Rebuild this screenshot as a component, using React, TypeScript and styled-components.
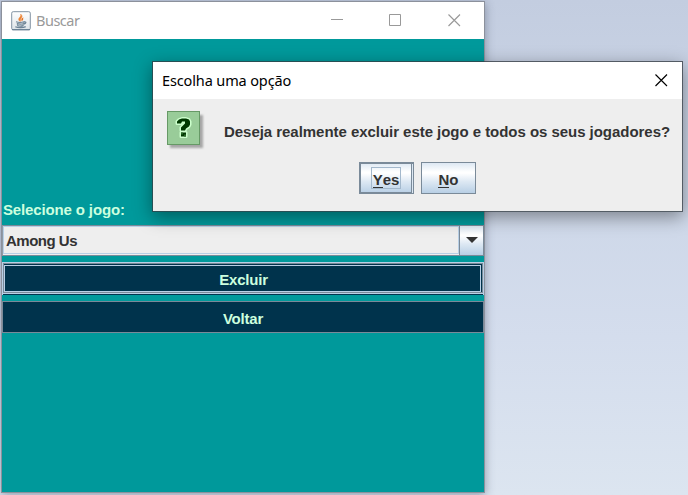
import React from "react";
import styled, { createGlobalStyle } from "styled-components";

const GlobalStyle = createGlobalStyle`
  * { box-sizing: border-box; }
  body { margin: 0; overflow: hidden; }
`;

const Desktop = styled.div`
  position: relative;
  width: 688px;
  height: 495px;
  overflow: hidden;
  background: linear-gradient(180deg, #c3cde0 0%, #ccd6e7 35%, #d4dded 68%, #dce5f0 100%);
  font-family: "Liberation Sans", Arial, sans-serif;
  font-weight: bold;
  font-size: 15px;
  color: #333;
`;

const Frame = styled.section<{ $x: number; $y: number; $w: number; $h: number; $active?: boolean }>`
  position: absolute;
  left: ${(p) => p.$x}px;
  top: ${(p) => p.$y}px;
  width: ${(p) => p.$w}px;
  height: ${(p) => p.$h}px;
  display: flex;
  flex-direction: column;
  border: 1px solid ${(p) => (p.$active ? "rgba(50, 58, 64, 0.78)" : "#8c919c")};
  background-clip: padding-box;
  box-shadow: ${(p) =>
    p.$active ? "0 5px 17px rgba(0, 0, 0, 0.4)" : "0 2px 9px rgba(40, 50, 75, 0.42)"};
`;

const TitleBar = styled.header<{ $active?: boolean }>`
  flex: none;
  display: flex;
  align-items: center;
  height: 37px;
  padding-left: 9px;
  background: #fff;
  font-family: "Noto Sans", sans-serif;
  font-weight: normal;
  font-size: 14.5px;
  color: ${(p) => (p.$active ? "#000" : "#999")};
`;

const Title = styled.span<{ $spacing: number }>`
  flex: 1;
  padding-bottom: 2px;
  letter-spacing: ${(p) => p.$spacing}px;
  white-space: nowrap;
`;

const AppIcon = styled.svg`
  width: 20px;
  height: 20px;
  margin-right: 5px;
`;

const WindowControls = styled.div<{ $inset: number }>`
  display: flex;
  gap: 46px;
  padding-right: ${(p) => p.$inset}px;
`;

const ControlIcon = styled.svg`
  display: block;
  width: 13px;
  height: 13px;
  fill: none;
  stroke: currentColor;
`;

const SearchBody = styled.main`
  flex: 1;
  display: flex;
  flex-direction: column;
  padding-top: 162px;
  background: #00999b;
`;

const FieldLabel = styled.label`
  height: 24px;
  padding-left: 1px;
  line-height: 17px;
  color: #ccffdf;
  letter-spacing: -0.14px;
`;

const ComboBox = styled.div`
  display: flex;
  height: 31px;
  border: 1px solid #7a8a99;
  border-left-color: #8f9aa6;
  margin-bottom: 6px;
  background: #eee;
`;

const ComboValue = styled.div`
  flex: 1;
  border: 1px solid #b8cfe5;
  margin-bottom: 1px;
  padding-left: 2px;
  line-height: 27px;
  letter-spacing: -0.5px;
`;

const metal = "linear-gradient(180deg, #dde8f3 0%, #fff 30%, #fff 34%, #dde8f3 62%, #b8cfe5 100%)";

const ComboArrow = styled.div`
  display: flex;
  align-items: center;
  justify-content: center;
  width: 24px;
  border-left: 1px solid #7a8a99;
  background: ${metal};
`;

const ArrowIcon = styled.svg`
  width: 12px;
  height: 6px;
  margin-bottom: 1px;
  fill: #333;
`;

const ActionButton = styled.button<{ $focused?: boolean }>`
  display: block;
  width: 100%;
  height: 32px;
  flex: none;
  padding: 0;
  border: 1px solid #7a8a99;
  background: #00334c;
  color: #ccffdf;
  font: inherit;
  line-height: 34px;
  letter-spacing: -0.2px;
  ${(p) =>
    p.$focused &&
    `
    height: 33px;
    margin-bottom: 6px;
    padding: 1px 1px 2px 0;
    border: 1px solid #b8cfe5;
    border-bottom: 0;
  `}
`;

const FocusBorder = styled.span`
  display: block;
  height: 30px;
  margin: -1px -1px 0 0;
  padding: 1px 1px 0 0;
  border: 1px solid #7a8a99;
  box-shadow: 0 1px 0 #b8cfe5;
`;

const FocusInner = styled.span`
  display: block;
  height: 27px;
  border: 1px solid #b8cfe5;
  line-height: 27px;
  padding-left: 2px;
`;

const DialogBody = styled.main`
  flex: 1;
  padding: 12px 12px 0 14px;
  background: #eee;
`;

const MessageRow = styled.div`
  display: flex;
  height: 51px;
`;

const QuestionIcon = styled.svg`
  flex: none;
  width: 40px;
  height: 42px;
`;

const Message = styled.p`
  margin: 0 0 0 17px;
  line-height: 42px;
  letter-spacing: -0.04px;
  white-space: nowrap;
`;

const DialogActions = styled.div`
  display: flex;
  gap: 7px;
  padding-left: 192px;
`;

const DialogButton = styled.button<{ $focused?: boolean }>`
  display: flex;
  align-items: center;
  justify-content: center;
  width: 55px;
  height: 32px;
  padding: 3px 0 0;
  border: 1px solid #7a8a99;
  background: ${metal};
  color: #333;
  font: inherit;
  ${(p) =>
    p.$focused &&
    `
    padding: 0 2px 0 0;
    box-shadow: inset 1px 1px 0 #7a8a99, inset -1px 0 0 #dde8f3, inset -2px -1px 0 #7a8a99;
  `}
`;

const FocusText = styled.span`
  width: 30px;
  height: 22px;
  padding-left: 1px;
  border: 1px solid #a3b8cc;
  line-height: 23px;
`;

const Mnemonic = styled.span`
  display: inline-block;
  height: 17px;
  line-height: 17px;
  border-bottom: 1px solid #333;
`;

const CloseIcon = () => (
  <ControlIcon viewBox="0 0 13 13">
    <path d="M.5.5 12 12M12 .5.5 12" strokeWidth="1.15" />
  </ControlIcon>
);

const JavaIcon = () => (
  <AppIcon viewBox="0 0 20 20">
    <defs>
      <linearGradient id="plate" x2="0" y2="1">
        <stop stopColor="#fff" />
        <stop offset="1" stopColor="#dce3e8" />
      </linearGradient>
    </defs>
    <rect x=".7" y=".7" width="18.6" height="18.1" rx="1.5" fill="url(#plate)" stroke="#8293a3" />
    <path d="M1 18.7h18" stroke="#5f788d" />
    <path d="M8.8 10.2c-3.2-3 2-3.7.9-7 3.4 3-1.2 4.2-.2 7Z" fill="#ed7f2a" stroke="#ed8b43" strokeWidth=".7" />
    <path d="M10.8 10.2c-1.2-1.9 0-3.1 1.8-4-1.1 1.7.7 2.1-1.8 4Z" fill="#e76f1d" />
    <path d="M5 10.8c2 .7 6 .7 8 0v1.7c-2 .7-5 .7-7.2.2M6.4 13.4l.6 1.3c1.6.5 3.8.4 5-.1l.3-1.2M13.2 10.8c2.5-.3 2 2-.3 2.3M4.3 15.7c2.5 1.2 8 1.2 10.4-.1" fill="none" stroke="#6d8496" strokeWidth="1.2" />
  </AppIcon>
);

const QuestionMark = () => (
  <QuestionIcon viewBox="0 0 40 42">
    <defs>
      <filter id="soft" x="-20%" y="-20%" width="150%" height="150%">
        <feGaussianBlur stdDeviation="1.3" />
      </filter>
    </defs>
    <rect x="3" y="4" width="33" height="33" fill="#777" opacity=".6" filter="url(#soft)" />
    <rect x=".5" y=".5" width="32" height="33" fill="#99cc99" stroke="#669966" />
    <g transform="translate(0 .6)">
      <path
        d="M10 12v-2l2-2 3-1h4l3 1 1 2v3l-1 2-3 2-1 2h-4v-3l2-2 2-2v-2h-3l-1 2Z M14 21h5v4h-5Z"
        fill="#003800"
        stroke="#ccffcc"
        strokeWidth="3"
        strokeLinejoin="round"
        paintOrder="stroke"
      />
      <path d="M14 21h2v2h-2ZM17 23h2v2h-2Z" fill="#286b28" />
    </g>
  </QuestionIcon>
);

export default function App() {
  return (
    <>
      <GlobalStyle />
      <Desktop>
        <Frame $x={1} $y={1} $w={484} $h={492}>
          <TitleBar>
            <JavaIcon />
            <Title $spacing={-0.5}>Buscar</Title>
            <WindowControls $inset={23}>
              <ControlIcon viewBox="0 0 13 13"><path d="M1 5.5h12" /></ControlIcon>
              <ControlIcon viewBox="0 0 13 13"><path d="M.5.5h11v11H.5Z" /></ControlIcon>
              <CloseIcon />
            </WindowControls>
          </TitleBar>
          <SearchBody>
            <FieldLabel>Selecione o jogo:</FieldLabel>
            <ComboBox>
              <ComboValue>Among Us</ComboValue>
              <ComboArrow>
                <ArrowIcon viewBox="0 0 12 6"><path d="M0 0h12L6 6Z" /></ArrowIcon>
              </ComboArrow>
            </ComboBox>
            <ActionButton $focused>
              <FocusBorder><FocusInner>Excluir</FocusInner></FocusBorder>
            </ActionButton>
            <ActionButton>Voltar</ActionButton>
          </SearchBody>
        </Frame>
        <Frame $x={152} $y={61} $w={531} $h={151} $active>
          <TitleBar $active>
            <Title $spacing={-0.13}>Escolha uma opção</Title>
            <WindowControls $inset={14}>
              <CloseIcon />
            </WindowControls>
          </TitleBar>
          <DialogBody>
            <MessageRow>
              <QuestionMark />
              <Message>Deseja realmente excluir este jogo e todos os seus jogadores?</Message>
            </MessageRow>
            <DialogActions>
              <DialogButton $focused>
                <FocusText><Mnemonic>Y</Mnemonic>es</FocusText>
              </DialogButton>
              <DialogButton>
                <span><Mnemonic>N</Mnemonic>o</span>
              </DialogButton>
            </DialogActions>
          </DialogBody>
        </Frame>
      </Desktop>
    </>
  );
}
